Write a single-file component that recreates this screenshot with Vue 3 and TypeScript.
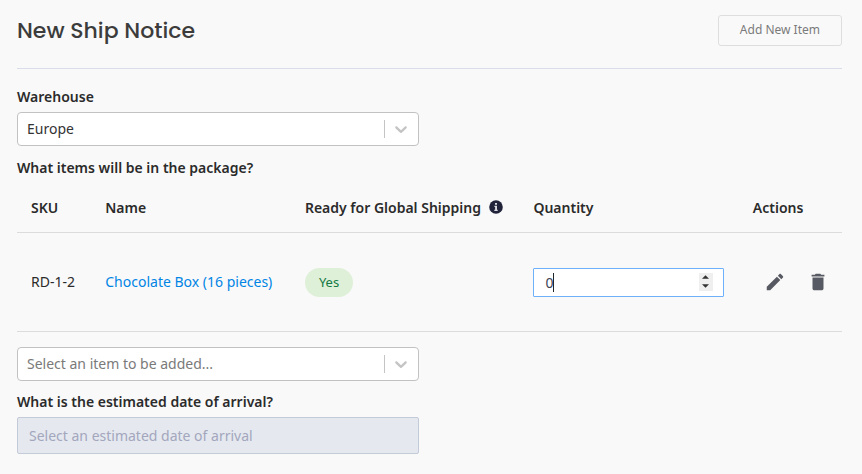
<script setup lang="ts">
import { ref } from 'vue'

interface ShipItem {
  sku: string
  name: string
  ready: boolean
  quantity: number
}

const warehouses = ['Europe']
const warehouse = ref('Europe')
const newItem = ref('')
const arrival = ref('')
const items = ref<ShipItem[]>([
  { sku: 'RD-1-2', name: 'Chocolate Box (16 pieces)', ready: true, quantity: 0 },
])

function step(item: ShipItem, delta: number) {
  item.quantity = Math.max(0, item.quantity + delta)
}

function remove(index: number) {
  items.value.splice(index, 1)
}
</script>

<template>
  <main class="page">
    <header class="header">
      <h1>New Ship Notice</h1>
      <button type="button" class="add">Add New Item</button>
    </header>

    <div class="fields">
      <label for="warehouse">Warehouse</label>
      <div class="select">
        <select id="warehouse" v-model="warehouse">
          <option v-for="w in warehouses" :key="w" :value="w">{{ w }}</option>
        </select>
        <span class="indicator">
          <svg width="20" height="20" viewBox="0 0 20 20" aria-hidden="true">
            <path d="M4.516 7.548c0.436-0.446 1.043-0.481 1.576 0l3.908 3.747 3.908-3.747c0.533-0.481 1.141-0.446 1.574 0 0.436 0.445 0.408 1.197 0 1.615-0.406 0.418-4.695 4.502-4.695 4.502-0.217 0.223-0.502 0.335-0.787 0.335s-0.57-0.112-0.789-0.335c0 0-4.287-4.084-4.695-4.502s-0.436-1.17 0-1.615z" />
          </svg>
        </span>
      </div>
    </div>

    <h2>What items will be in the package?</h2>
    <table>
      <colgroup>
        <col class="c-sku" />
        <col class="c-name" />
        <col class="c-ready" />
        <col class="c-qty" />
        <col />
      </colgroup>
      <thead>
        <tr>
          <th>SKU</th>
          <th>Name</th>
          <th>
            <span class="with-info">
              Ready for Global Shipping
              <svg width="14" height="14" viewBox="0 0 14 14" aria-hidden="true">
                <circle cx="7" cy="7" r="6.8" fill="#20233a" />
                <path d="M6 3h2v1.800H6zM5.400 5.800H8v3.900h.7V11H5.300V9.700h.8V7h-.7z" fill="#d9dae0" />
              </svg>
            </span>
          </th>
          <th>Quantity</th>
          <th>Actions</th>
        </tr>
      </thead>
      <tbody>
        <tr v-for="(item, i) in items" :key="item.sku">
          <td>{{ item.sku }}</td>
          <td><a href="#">{{ item.name }}</a></td>
          <td><span class="pill">{{ item.ready ? 'Yes' : 'No' }}</span></td>
          <td>
            <div class="qty">
              <input v-model.number="item.quantity" type="number" min="0" aria-label="Quantity" />
              <span class="caret"></span>
              <span class="spin">
                <button type="button" aria-label="Increase" @click="step(item, 1)">
                  <svg width="8" height="4" viewBox="0 0 8 4"><path d="M4 0l4 4H0z" /></svg>
                </button>
                <button type="button" aria-label="Decrease" @click="step(item, -1)">
                  <svg width="8" height="4" viewBox="0 0 8 4"><path d="M0 0h8L4 4z" /></svg>
                </button>
              </span>
            </div>
          </td>
          <td>
            <div class="actions">
              <button type="button" aria-label="Edit">
                <svg width="22" height="22" viewBox="0 0 24 24"><path d="M3 17.250V21h3.750L17.810 9.940l-3.750-3.750L3 17.250zM20.710 7.040c.39-.39.39-1.020 0-1.410l-2.340-2.340c-.39-.39-1.020-.39-1.410 0l-1.830 1.830 3.750 3.750 1.830-1.830z" /></svg>
              </button>
              <button type="button" aria-label="Delete" @click="remove(i)">
                <svg width="22" height="22" viewBox="0 0 24 24"><path d="M6 19c0 1.100.9 2 2 2h8c1.100 0 2-.9 2-2V7H6v12zM19 4h-3.500l-1-1h-5l-1 1H5v2h14V4z" /></svg>
              </button>
            </div>
          </td>
        </tr>
      </tbody>
    </table>

    <div class="fields">
      <div class="select">
        <select id="new-item" v-model="newItem" class="empty" aria-label="Item to be added">
          <option value="">Select an item to be added...</option>
        </select>
        <span class="indicator">
          <svg width="20" height="20" viewBox="0 0 20 20" aria-hidden="true">
            <path d="M4.516 7.548c0.436-0.446 1.043-0.481 1.576 0l3.908 3.747 3.908-3.747c0.533-0.481 1.141-0.446 1.574 0 0.436 0.445 0.408 1.197 0 1.615-0.406 0.418-4.695 4.502-4.695 4.502-0.217 0.223-0.502 0.335-0.787 0.335s-0.57-0.112-0.789-0.335c0 0-4.287-4.084-4.695-4.502s-0.436-1.17 0-1.615z" />
          </svg>
        </span>
      </div>
      <label for="arrival" class="arrival-label">What is the estimated date of arrival?</label>
      <input id="arrival" v-model="arrival" class="date" type="text" placeholder="Select an estimated date of arrival" disabled />
    </div>
  </main>
</template>

<style>
body {
  background: #f9f9f9;
}
</style>

<style scoped>
.page {
  box-sizing: border-box;
  padding: 15px 20px 20px 17px;
  font: 14px/20px "Noto Sans", "Open Sans", sans-serif;
  color: #2b2b2b;
}
.header {
  display: flex;
  justify-content: space-between;
  align-items: flex-start;
  padding-bottom: 22px;
  border-bottom: 1px solid #d9dce9;
  margin-bottom: 18px;
}
h1 {
  margin: 0;
  font: 500 22px/31px Poppins, Inter, sans-serif;
  color: #3c3c3c;
}
.add {
  height: 31px;
  padding: 0 21px 2px;
  border: 1px solid #dedede;
  border-radius: 3px;
  background: transparent;
  font: 12px/18px "Noto Sans", "Open Sans", sans-serif;
  color: #7b7b7b;
}
.fields {
  display: grid;
  grid-template-columns: 1fr 1fr;
  column-gap: 21px;
}
.fields > * {
  grid-column: 1;
}
label,
h2,
th {
  font-size: 14px;
  font-weight: 600;
  line-height: 20px;
}
label {
  margin-bottom: 5px;
}
h2 {
  margin: 12px 0 0;
}
.select {
  display: grid;
}
.select > * {
  grid-area: 1 / 1;
}
select {
  appearance: none;
  height: 34px;
  width: 100%;
  padding: 0 44px 0 9px;
  border: 1px solid #c2c2c2;
  border-radius: 4px;
  background: #fff;
  font: inherit;
  color: #333;
}
select.empty {
  color: #7a7a7a;
}
.indicator {
  justify-self: end;
  align-self: center;
  display: flex;
  align-items: center;
  height: 18px;
  padding: 0 8px 0 6px;
  border-left: 1px solid #c4c4c4;
  pointer-events: none;
}
.indicator svg {
  width: 20px;
  fill: #c4c4c4;
}
table {
  width: 100%;
  table-layout: fixed;
  border-collapse: separate;
  border-spacing: 0;
  margin-bottom: 15px;
}
.c-sku { width: 9%; }
.c-name { width: 24.2%; }
.c-ready { width: 27.7%; }
.c-qty { width: 26.6%; }
th,
td {
  padding: 0 15px 0 14px;
  text-align: left;
  white-space: nowrap;
  border-bottom: 1px solid #dcdcdc;
}
th {
  height: 48px;
  padding-top: 6px;
}
td {
  height: 98px;
}
th:last-child,
td:last-child {
  padding-right: 0;
}
.with-info {
  display: flex;
  align-items: center;
  gap: 8px;
}
.with-info svg {
  margin-bottom: 2px;
}
a {
  color: #0085e5;
  text-decoration: none;
}
.pill {
  display: inline-block;
  padding: 5px 14px 6px;
  border-radius: 15px;
  background: #dff0d8;
  font-size: 13px;
  line-height: 18px;
  color: #147a43;
}
.qty {
  position: relative;
}
.qty input {
  display: block;
  box-sizing: border-box;
  width: 100%;
  height: 29px;
  padding: 0 30px 0 11px;
  border: 1px solid #6eb0fa;
  border-radius: 1px;
  outline: 0;
  background: #fff;
  font: inherit;
  color: #3b4252;
  appearance: textfield;
}
.qty input::-webkit-inner-spin-button {
  appearance: none;
}
.caret {
  position: absolute;
  left: 20px;
  top: 5px;
  width: 1px;
  height: 19px;
  background: #20242c;
}
.spin {
  position: absolute;
  right: 11px;
  top: 5px;
  display: flex;
  flex-direction: column;
  width: 14px;
  height: 18px;
  background: #efefef;
}
.spin button,
.actions button {
  display: flex;
  align-items: center;
  justify-content: center;
  padding: 0;
  border: 0;
  background: none;
}
.spin button {
  flex: 1;
}
.spin svg {
  width: 7px;
  fill: #333;
}
.actions {
  display: flex;
  gap: 21px;
  padding-left: 11px;
}
.actions svg {
  fill: #585a63;
}
.arrival-label {
  margin-top: 11px;
}
.date {
  box-sizing: border-box;
  width: 100%;
  height: 37px;
  padding: 0 11px;
  border: 1px solid #c3cad8;
  border-radius: 2px;
  background: #e5e9ef;
  font: inherit;
}
.date::placeholder {
  color: #a3a6bd;
}
</style>
